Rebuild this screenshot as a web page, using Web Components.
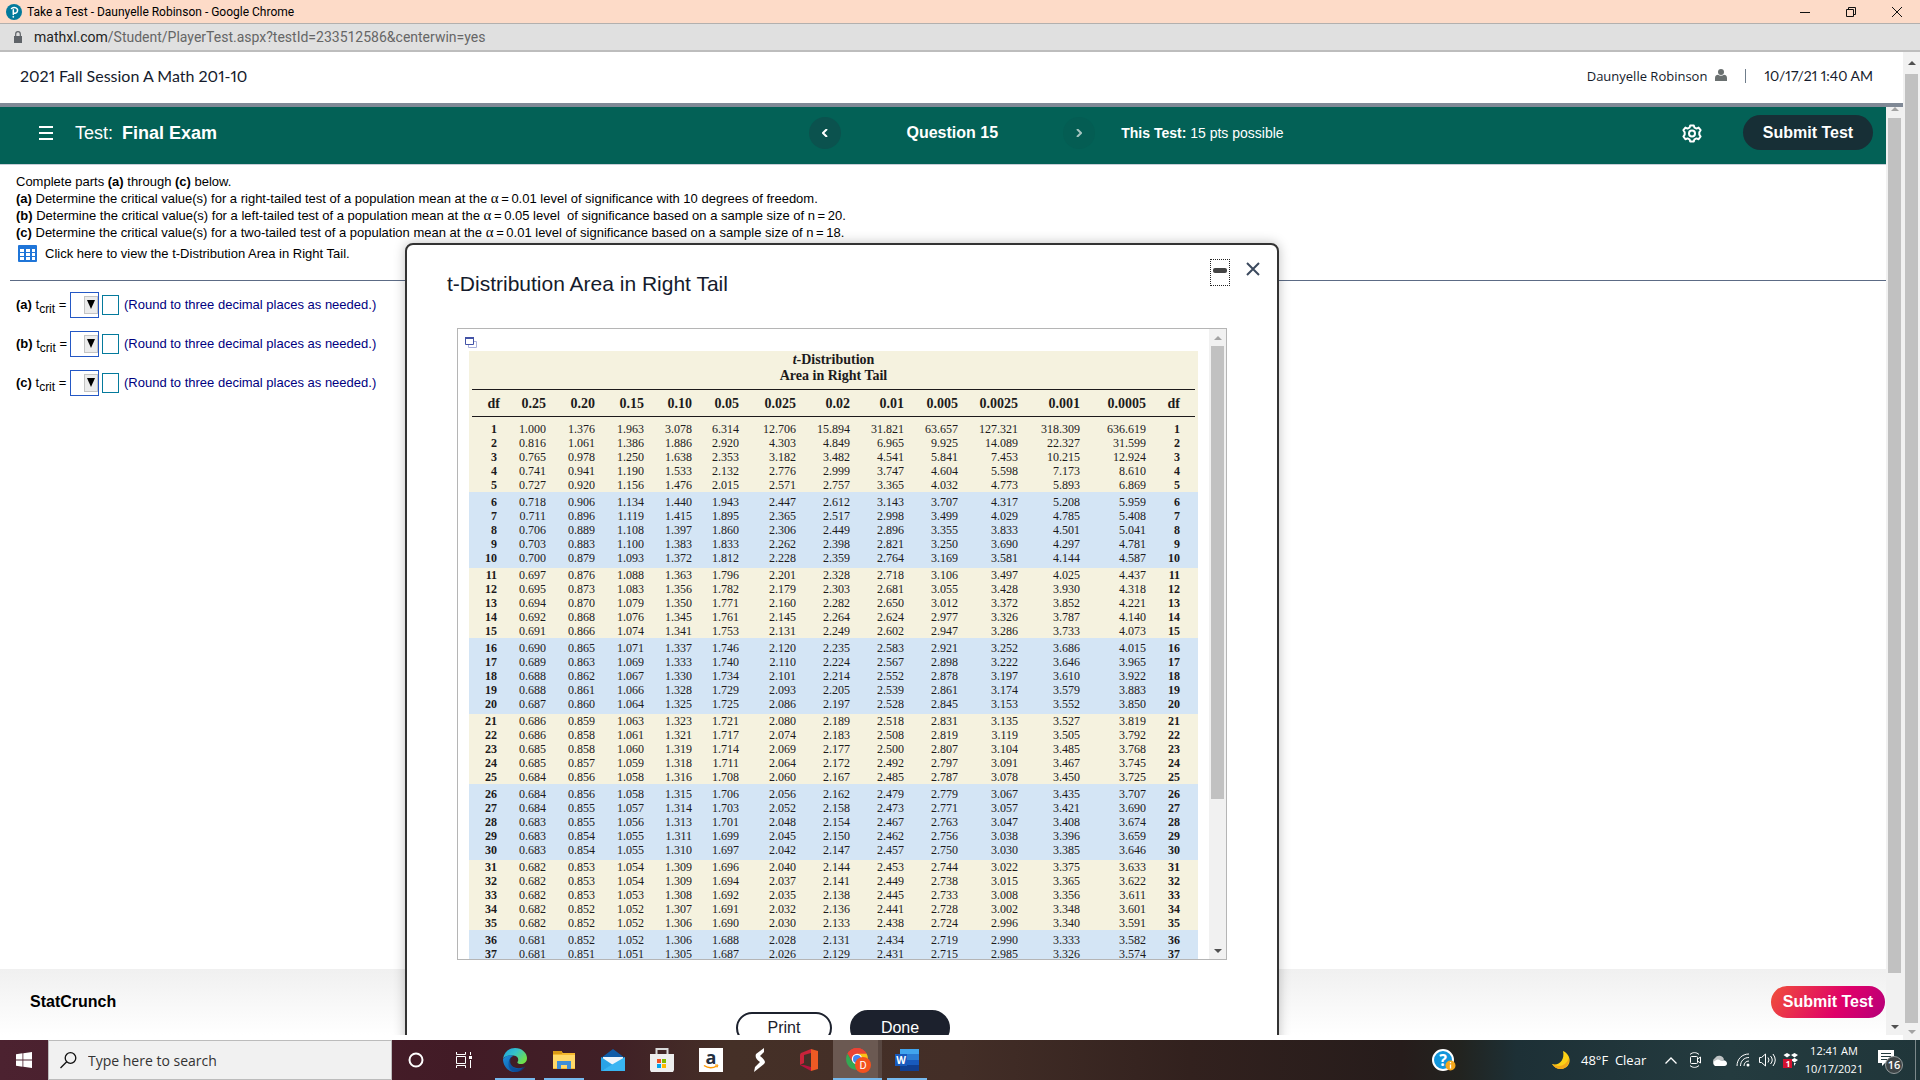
<!DOCTYPE html>
<html lang="en">
<head>
<meta charset="utf-8">
<title>Take a Test - Daunyelle Robinson - Google Chrome</title>
<style>
  body {
    margin: 0;
    height: 100vh;
    overflow: hidden;
    font-family: "Liberation Sans", Arial, sans-serif;
    background: #fff;
    color: #000;
  }
</style>
</head>
<body>
<desktop-screen>
  <window-bar slot="window">Take a Test - Daunyelle Robinson - Google Chrome</window-bar>
  <address-bar slot="window" host="mathxl.com" path="/Student/PlayerTest.aspx?testId=233512586&amp;centerwin=yes"></address-bar>
  <course-header slot="page" user="Daunyelle Robinson" time="10/17/21 1:40 AM">2021 Fall Session A Math 201-10</course-header>
  <test-player slot="page">
    <test-bar slot="top" name="Final Exam" points="15 pts possible">Question 15</test-bar>
    <question-text slot="content"></question-text>
    <answer-row slot="content" part="a"></answer-row>
    <answer-row slot="content" part="b"></answer-row>
    <answer-row slot="content" part="c"></answer-row>
    <player-footer slot="bottom"></player-footer>
    <popup-dialog slot="popup" heading="t-Distribution Area in Right Tail">
      <t-table></t-table>
    </popup-dialog>
  </test-player>
  <task-bar slot="taskbar"></task-bar>
</desktop-screen>

<script>
// Page shell: window bars, the page with its scrollbar, the taskbar
class DesktopScreen extends HTMLElement {
  constructor() {
    super();
    this.attachShadow({ mode: 'open' });
    this.shadowRoot.innerHTML = `
      <style>
        :host { display: flex; flex-direction: column; height: 100vh; }
        .view { display: flex; flex: 1; min-height: 0; }
        .page { display: flex; flex-direction: column; flex: 1; min-width: 0; padding-bottom: 5px; }
      </style>
      <slot name="window"></slot>
      <div class="view">
        <div class="page"><slot name="page"></slot></div>
        <scroll-bar style="--up: 22px; --thumb: 100%; --up-color: #505050; --down-color: #a3a3a3"></scroll-bar>
      </div>
      <slot name="taskbar"></slot>
    `;
  }
}
customElements.define('desktop-screen', DesktopScreen);

class ScrollBar extends HTMLElement {
  constructor() {
    super();
    this.attachShadow({ mode: 'open' });
    this.shadowRoot.innerHTML = `
      <style>
        :host {
          display: flex;
          flex-direction: column;
          flex: none;
          width: 17px;
          background: #f1f1f1;
        }
        .arrow { display: flex; align-items: center; justify-content: center; flex: none; height: 17px; }
        .up { height: var(--up, 17px); align-items: var(--up-align, center); }
        .up svg { fill: var(--up-color, #a3a3a3); }
        .down svg { fill: var(--down-color, #505050); }
        .track { flex: 1; padding: 0 2px; }
        .thumb { height: var(--thumb); background: #c1c1c1; }
      </style>
      <div class="arrow up"><svg width="8" height="4"><path d="M0 4 4 0 8 4z"/></svg></div>
      <div class="track"><div class="thumb"></div></div>
      <div class="arrow down"><svg width="8" height="4"><path d="M0 0 4 4 8 0z"/></svg></div>
    `;
  }
}
customElements.define('scroll-bar', ScrollBar);

class WindowBar extends HTMLElement {
  constructor() {
    super();
    this.attachShadow({ mode: 'open' });
    this.shadowRoot.innerHTML = `
      <style>
        :host {
          display: flex;
          align-items: center;
          height: 23px;
          padding-left: 6px;
          background: #fddbc8;
          border-bottom: 1px solid #b3b0ae;
          font: 12px/16px Roboto, "Open Sans", sans-serif;
        }
        .title { flex: 1; margin-left: 5px; }
        button {
          display: flex;
          align-items: center;
          justify-content: center;
          width: 46px;
          height: 22px;
          padding: 0;
          border: 0;
          background: none;
        }
        .buttons { display: flex; }
        svg { fill: none; stroke: #111; }
        .logo { stroke: none; }
      </style>
      <svg class="logo" width="16" height="16" viewBox="0 0 16 16">
        <circle cx="8" cy="8" r="8" fill="#047a9c"/>
        <path d="M5.500 4.500C8.500 2.500 12 4 11.500 6.800 11.200 8.800 9.400 9.600 7.600 9.200M7.300 5.800v4.700" fill="none" stroke="#fff" stroke-width="1.500" stroke-linecap="round"/>
        <circle cx="7.300" cy="12.800" r=".9" fill="#fff"/>
      </svg>
      <span class="title"><slot></slot></span>
      <div class="buttons">
        <button aria-label="Minimize"><svg width="10" height="10"><path d="M0 5.500h10"/></svg></button>
        <button aria-label="Restore"><svg width="10" height="10"><path d="M.5 2.500h7v7h-7zM2.500 2.500v-2h7v7h-2"/></svg></button>
        <button aria-label="Close"><svg width="10" height="10"><path d="M0 0 10 10M10 0 0 10"/></svg></button>
      </div>
    `;
  }
}
customElements.define('window-bar', WindowBar);

class AddressBar extends HTMLElement {
  connectedCallback() {
    this.attachShadow({ mode: 'open' });
    this.shadowRoot.innerHTML = `
      <style>
        :host {
          display: flex;
          align-items: center;
          gap: 12px;
          height: 26px;
          padding-left: 14px;
          background: #e0e0e0;
          border-bottom: 2px solid #bdbdbd;
          font: 14px/20px Roboto, "Open Sans", sans-serif;
          color: #666;
        }
        b { font-weight: normal; color: #222; }
      </style>
      <svg width="8" height="12" viewBox="0 0 8 12">
        <path d="M0 5h8v7H0z" fill="#5f6368"/>
        <path d="M1.700 5V3a2.300 2.300 0 0 1 4.600 0v2" fill="none" stroke="#5f6368" stroke-width="1.200"/>
      </svg>
      <span><b>${this.getAttribute('host')}</b>${this.getAttribute('path').replace('&', '&amp;')}</span>
    `;
  }
}
customElements.define('address-bar', AddressBar);

class CourseHeader extends HTMLElement {
  connectedCallback() {
    this.attachShadow({ mode: 'open' });
    this.shadowRoot.innerHTML = `
      <style>
        :host {
          display: flex;
          align-items: center;
          height: 48px;
          padding: 0 30px 3px 20px;
          border-bottom: 4px solid #808996;
          font: 16px/20px Lato, sans-serif;
          font-variant-numeric: proportional-nums;
          color: #151b2c;
        }
        .course { flex: 1; }
        .user { font: 13px/20px "Open Sans", sans-serif; }
        time { font-size: 14px; }
        svg { margin: 0 18px 2px 8px; fill: #6a7070; }
        .bar { width: 1px; height: 14px; margin-right: 18px; background: #6f7d8b; }
      </style>
      <span class="course"><slot></slot></span>
      <span class="user">${this.getAttribute('user')}</span>
      <svg width="12" height="12" viewBox="0 0 12 12">
        <circle cx="6" cy="3" r="3"/>
        <path d="M0 12V9c0-2 1.500-3.200 3-3.200 1.800 1.400 4.200 1.400 6 0 1.500 0 3 1.200 3 3.200v3z"/>
      </svg>
      <span class="bar"></span>
      <time>${this.getAttribute('time')}</time>
    `;
  }
}
customElements.define('course-header', CourseHeader);

class TestPlayer extends HTMLElement {
  constructor() {
    super();
    this.attachShadow({ mode: 'open' });
    this.shadowRoot.innerHTML = `
      <style>
        :host { display: flex; flex: 1; min-height: 0; position: relative; overflow: hidden; }
        .frame { display: flex; flex-direction: column; flex: 1; min-width: 0; }
        .content { flex: 1; min-height: 0; }
        /* the popup floats over the question */
        ::slotted([slot="popup"]) { position: absolute; left: 405px; top: 136px; }
      </style>
      <div class="frame">
        <slot name="top"></slot>
        <div class="content"><slot name="content"></slot></div>
        <slot name="bottom"></slot>
      </div>
      <scroll-bar style="--up: 11px; --up-align: flex-start; --thumb: 95%"></scroll-bar>
      <slot name="popup"></slot>
    `;
  }
}
customElements.define('test-player', TestPlayer);

class TestBar extends HTMLElement {
  connectedCallback() {
    this.attachShadow({ mode: 'open' });
    this.shadowRoot.innerHTML = `
      <style>
        :host {
          display: grid;
          grid-template-columns: 42% 286px 1fr auto auto;
          align-items: center;
          height: 57px;
          padding: 0 13px 0 39px;
          background: #036156;
          border-bottom: 1px solid #c7cdd6;
          font-size: 16px;
          line-height: 20px;
          color: #fff;
        }
        button {
          display: flex;
          align-items: center;
          justify-content: center;
          padding: 0;
          border: 0;
          background: none;
          color: inherit;
        }
        svg { fill: none; stroke: currentColor; stroke-width: 2; }
        .name { display: flex; align-items: center; gap: 9px; font-size: 18px; padding-bottom: 6px; }
        .menu { margin-right: 13px; }
        .nav { display: flex; align-items: center; justify-content: space-between; font-weight: bold; padding-bottom: 6px; }
        .nav button { width: 32px; height: 32px; border-radius: 16px; background: #0b524e; }
        .nav button:disabled { background: #045d53; color: #a5c5c0; }
        .points { margin-left: 26px; font-size: 14px; padding-bottom: 6px; }
        .gear { width: 24px; height: 24px; margin: 0 39px 4px 0; }
        .submit {
          width: 130px;
          height: 35px;
          margin-bottom: 6px;
          border-radius: 18px;
          background: #172f36;
          font: bold 16px/20px "Liberation Sans", Arial, sans-serif;
        }
      </style>
      <div class="name">
        <button class="menu" aria-label="Menu"><svg width="14" height="14"><path d="M0 1h14M0 7h14M0 13h14"/></svg></button>
        <span>Test:</span><b>${this.getAttribute('name')}</b>
      </div>
      <div class="nav">
        <button aria-label="Previous question"><svg width="6" height="8"><path d="M5 0 1 4 5 8"/></svg></button>
        <span><slot></slot></span>
        <button aria-label="Next question" disabled><svg width="6" height="8"><path d="M1 0 5 4 1 8"/></svg></button>
      </div>
      <div class="points"><b>This Test:</b> ${this.getAttribute('points')}</div>
      <button class="gear" aria-label="Settings">
        <svg width="20" height="20" viewBox="0 0 20 20">
          <path d="M8.200 1.500h3.600l.7 2.200 2 .9 2.100-1 2 2.600-1.300 2v2.400l1.300 1.900-2 2.700-2.200-.8-1.900.9-.7 2.100H8.200l-.7-2.100-1.900-.9-2.200.8-2-2.700 1.300-1.900V8.200l-1.300-2 2-2.600 2.100 1 2-.9z" stroke-linejoin="round"/>
          <circle cx="10" cy="9.500" r="3"/>
        </svg>
      </button>
      <button class="submit">Submit Test</button>
    `;
  }
}
customElements.define('test-bar', TestBar);

class QuestionText extends HTMLElement {
  constructor() {
    super();
    this.attachShadow({ mode: 'open' });
    this.shadowRoot.innerHTML = `
      <style>
        :host {
          display: block;
          margin: 0 0 4px 10px;
          padding: 8px 0 14px 6px;
          border-bottom: 1px solid #5c6b85;
          font-size: 13px;
          line-height: 17px;
        }
        p { margin: 0; white-space: pre; }
        i { font-style: normal; font-family: "Liberation Serif", serif; font-size: 15px; line-height: 1px; }
        a { display: inline-flex; align-items: center; gap: 8px; margin: 4px 0 0 2px; color: inherit; text-decoration: none; }
      </style>
      <p>Complete parts <b>(a)</b> through <b>(c)</b> below.</p>
      <p><b>(a)</b> Determine the critical value(s) for a right-tailed test of a population mean at the <i>α</i>&thinsp;=&thinsp;0.01 level of significance with 10 degrees of freedom.</p>
      <p><b>(b)</b> Determine the critical value(s) for a left-tailed test of a population mean at the <i>α</i>&thinsp;=&thinsp;0.05 level  of significance based on a sample size of n&thinsp;=&thinsp;20.</p>
      <p><b>(c)</b> Determine the critical value(s) for a two-tailed test of a population mean at the <i>α</i>&thinsp;=&thinsp;0.01 level of significance based on a sample size of n&thinsp;=&thinsp;18.</p>
      <a href="#table">
        <svg width="19" height="17">
          <rect width="19" height="17" rx="1" fill="#1f75d8"/>
          <path d="M2 4h4v3H2zM8 4h4v3H8zM14 4h3v3h-3zM2 8h4v3H2zM8 8h4v3H8zM14 8h3v3h-3zM2 12h4v3H2zM8 12h4v3H8zM14 12h3v3h-3z" fill="#fff"/>
        </svg>
        <span>Click here to view the t-Distribution Area in Right Tail.</span>
      </a>
    `;
  }
}
customElements.define('question-text', QuestionText);

class AnswerRow extends HTMLElement {
  connectedCallback() {
    const part = this.getAttribute('part');
    this.attachShadow({ mode: 'open' });
    this.shadowRoot.innerHTML = `
      <style>
        :host {
          display: flex;
          align-items: center;
          height: 39px;
          padding-left: 16px;
          font-size: 13px;
          line-height: 17px;
        }
        label { width: 54px; white-space: nowrap; }
        sub { font-size: 12px; line-height: 1px; }
        .drop { display: grid; width: 29px; height: 26px; margin-right: 3px; }
        .drop > * { grid-area: 1 / 1; }
        select { appearance: none; box-sizing: border-box; width: 29px; height: 26px; border: 1px solid #2458c5; border-radius: 0; background: #fff; }
        .arrow {
          justify-self: end;
          align-self: center;
          width: 14px;
          height: 18px;
          margin-right: 1px;
          border: 1px solid #c4c4c4;
          box-sizing: border-box;
          background: #ececec;
          pointer-events: none;
        }
        .arrow svg { display: block; margin: 3px 2px; }
        input { box-sizing: border-box; width: 17px; height: 20px; margin: 0 5px 0 0; padding: 0 1px; border: 1px solid #047a9c; }
        .hint { color: #000080; }
      </style>
      <label for="sign"><b>(${part})</b> t<sub>crit</sub> =</label>
      <span class="drop">
        <select id="sign"><option></option><option>±</option><option>-</option></select>
        <span class="arrow"><svg width="8" height="10"><path d="M0 0h8L4 9z"/></svg></span>
      </span>
      <input id="value" type="text" aria-label="Critical value for part ${part}">
      <span class="hint">(Round to three decimal places as needed.)</span>
    `;
  }
}
customElements.define('answer-row', AnswerRow);

class PlayerFooter extends HTMLElement {
  constructor() {
    super();
    this.attachShadow({ mode: 'open' });
    this.shadowRoot.innerHTML = `
      <style>
        :host {
          display: flex;
          align-items: center;
          justify-content: space-between;
          box-sizing: border-box;
          height: 66px;
          padding: 0 1px 0 30px;
          background: linear-gradient(#f0f0f0, #fff);
        }
        a { color: #000; font: bold 16px/20px "Liberation Sans", Arial, sans-serif; text-decoration: none; }
        button {
          width: 114px;
          height: 32px;
          padding: 0;
          border: 0;
          border-radius: 16px;
          background: linear-gradient(120deg, #f0503a, #df0069 60%, #b5007a);
          color: #fff;
          font: bold 16px/20px "Liberation Sans", Arial, sans-serif;
        }
      </style>
      <a href="#statcrunch">StatCrunch</a>
      <button>Submit Test</button>
    `;
  }
}
customElements.define('player-footer', PlayerFooter);

class PopupDialog extends HTMLElement {
  connectedCallback() {
    this.attachShadow({ mode: 'open' });
    this.shadowRoot.innerHTML = `
      <style>
        :host {
          display: block;
          box-sizing: border-box;
          width: 874px;
          border: 2px solid #333;
          border-radius: 8px;
          background: #fff;
          box-shadow: 0 0 12px rgba(0, 0, 0, .25);
        }
        header { display: flex; align-items: flex-start; height: 83px; padding: 0 17px 0 40px; }
        h2 { flex: 1; margin: 27px 0 0; font-weight: normal; font-size: 21px; line-height: 24px; color: #151b2c; }
        header button { display: flex; align-items: center; justify-content: center; padding: 0; border: 0; background: none; }
        header .min { width: 20px; height: 27px; margin: 14px 16px 0 0; padding-bottom: 5px; border: 1px dotted #222; box-sizing: border-box; }
        .min span { width: 14px; height: 5px; border-radius: 2px; background: #444; }
        .close { margin-top: 17px; }
        .scroller {
          display: flex;
          box-sizing: border-box;
          height: 632px;
          margin: 0 50px;
          border: 1px solid #b5b5b5;
          overflow: hidden;
        }
        .inner { flex: 1; min-width: 0; padding-left: 11px; }
        .open { display: flex; height: 14px; margin-left: -4px; padding: 8px 0 0; border: 0; background: none; box-sizing: content-box; }
        footer { display: flex; justify-content: center; align-items: center; gap: 18px; padding: 50px 0 40px 2px; }
        footer button {
          width: 96px;
          height: 32px;
          padding: 0;
          border: 2px solid #1c212d;
          border-radius: 17px;
          background: #fff;
          color: #1c212d;
          font: 16px/20px "Liberation Sans", Arial, sans-serif;
        }
        footer .done { width: 100px; height: 36px; border-radius: 18px; background: #1c212d; color: #fff; }
      </style>
      <header>
        <h2>${this.getAttribute('heading')}</h2>
        <button class="min" aria-label="Minimize"><span></span></button>
        <button class="close" aria-label="Close"><svg width="14" height="14"><path d="M1 1 13 13M13 1 1 13" stroke="#3c4a5e" stroke-width="2"/></svg></button>
      </header>
      <div class="scroller">
        <div class="inner">
          <button class="open" aria-label="Open table in new window">
            <svg width="12" height="11">
              <path d="M3.500 4.500h8v6h-8z" fill="#fff" stroke="#aab1dc"/>
              <path d="M.5.5h8v7h-8z" fill="#fff" stroke="#4353a6"/><path d="M0 0h9v2H0z" fill="#4353a6"/>
            </svg>
          </button>
          <slot></slot>
        </div>
        <scroll-bar style="--up: 17px; --thumb: 76%"></scroll-bar>
      </div>
      <footer><button>Print</button><button class="done">Done</button></footer>
    `;
  }
}
customElements.define('popup-dialog', PopupDialog);

// Critical values of the t-distribution, one line per df
const areas = '0.25 0.20 0.15 0.10 0.05 0.025 0.02 0.01 0.005 0.0025 0.001 0.0005'.split(' ');
const values = `
1.000 1.376 1.963 3.078 6.314 12.706 15.894 31.821 63.657 127.321 318.309 636.619
0.816 1.061 1.386 1.886 2.920 4.303 4.849 6.965 9.925 14.089 22.327 31.599
0.765 0.978 1.250 1.638 2.353 3.182 3.482 4.541 5.841 7.453 10.215 12.924
0.741 0.941 1.190 1.533 2.132 2.776 2.999 3.747 4.604 5.598 7.173 8.610
0.727 0.920 1.156 1.476 2.015 2.571 2.757 3.365 4.032 4.773 5.893 6.869
0.718 0.906 1.134 1.440 1.943 2.447 2.612 3.143 3.707 4.317 5.208 5.959
0.711 0.896 1.119 1.415 1.895 2.365 2.517 2.998 3.499 4.029 4.785 5.408
0.706 0.889 1.108 1.397 1.860 2.306 2.449 2.896 3.355 3.833 4.501 5.041
0.703 0.883 1.100 1.383 1.833 2.262 2.398 2.821 3.250 3.690 4.297 4.781
0.700 0.879 1.093 1.372 1.812 2.228 2.359 2.764 3.169 3.581 4.144 4.587
0.697 0.876 1.088 1.363 1.796 2.201 2.328 2.718 3.106 3.497 4.025 4.437
0.695 0.873 1.083 1.356 1.782 2.179 2.303 2.681 3.055 3.428 3.930 4.318
0.694 0.870 1.079 1.350 1.771 2.160 2.282 2.650 3.012 3.372 3.852 4.221
0.692 0.868 1.076 1.345 1.761 2.145 2.264 2.624 2.977 3.326 3.787 4.140
0.691 0.866 1.074 1.341 1.753 2.131 2.249 2.602 2.947 3.286 3.733 4.073
0.690 0.865 1.071 1.337 1.746 2.120 2.235 2.583 2.921 3.252 3.686 4.015
0.689 0.863 1.069 1.333 1.740 2.110 2.224 2.567 2.898 3.222 3.646 3.965
0.688 0.862 1.067 1.330 1.734 2.101 2.214 2.552 2.878 3.197 3.610 3.922
0.688 0.861 1.066 1.328 1.729 2.093 2.205 2.539 2.861 3.174 3.579 3.883
0.687 0.860 1.064 1.325 1.725 2.086 2.197 2.528 2.845 3.153 3.552 3.850
0.686 0.859 1.063 1.323 1.721 2.080 2.189 2.518 2.831 3.135 3.527 3.819
0.686 0.858 1.061 1.321 1.717 2.074 2.183 2.508 2.819 3.119 3.505 3.792
0.685 0.858 1.060 1.319 1.714 2.069 2.177 2.500 2.807 3.104 3.485 3.768
0.685 0.857 1.059 1.318 1.711 2.064 2.172 2.492 2.797 3.091 3.467 3.745
0.684 0.856 1.058 1.316 1.708 2.060 2.167 2.485 2.787 3.078 3.450 3.725
0.684 0.856 1.058 1.315 1.706 2.056 2.162 2.479 2.779 3.067 3.435 3.707
0.684 0.855 1.057 1.314 1.703 2.052 2.158 2.473 2.771 3.057 3.421 3.690
0.683 0.855 1.056 1.313 1.701 2.048 2.154 2.467 2.763 3.047 3.408 3.674
0.683 0.854 1.055 1.311 1.699 2.045 2.150 2.462 2.756 3.038 3.396 3.659
0.683 0.854 1.055 1.310 1.697 2.042 2.147 2.457 2.750 3.030 3.385 3.646
0.682 0.853 1.054 1.309 1.696 2.040 2.144 2.453 2.744 3.022 3.375 3.633
0.682 0.853 1.054 1.309 1.694 2.037 2.141 2.449 2.738 3.015 3.365 3.622
0.682 0.853 1.053 1.308 1.692 2.035 2.138 2.445 2.733 3.008 3.356 3.611
0.682 0.852 1.052 1.307 1.691 2.032 2.136 2.441 2.728 3.002 3.348 3.601
0.682 0.852 1.052 1.306 1.690 2.030 2.133 2.438 2.724 2.996 3.340 3.591
0.681 0.852 1.052 1.306 1.688 2.028 2.131 2.434 2.719 2.990 3.333 3.582
0.681 0.851 1.051 1.305 1.687 2.026 2.129 2.431 2.715 2.985 3.326 3.574
`.trim().split('\n').map(line => line.split(' '));
const widths = [31, 46, 49, 49, 48, 47, 57, 54, 54, 54, 60, 62, 66, 52];

class TTable extends HTMLElement {
  constructor() {
    super();
    this.attachShadow({ mode: 'open' });
    // rows come in groups of five
    let bodies = '';
    for (let i = 0; i < values.length; i += 5) {
      const rows = values.slice(i, i + 5).map((row, n) => {
        const df = `<th scope="row">${i + n + 1}</th>`;
        return `<tr>${df}${row.map(v => `<td>${v}</td>`).join('')}${df}</tr>`;
      });
      bodies += `<tbody>${rows.join('')}</tbody>`;
    }
    this.shadowRoot.innerHTML = `
      <style>
        :host { display: block; }
        table {
          table-layout: fixed;
          width: 729px;
          border-collapse: collapse;
          font: 12px/14px "Liberation Serif", "Times New Roman", serif;
          text-align: right;
          color: #1c1a1b;
          background: #f5f2df;
        }
        caption { padding: 1px 0 5px; font: bold 14px/16px "Liberation Serif", serif; text-align: center; background: #f5f2df; }
        td, th { padding: 0; }
        tbody th:first-child { padding-right: 3px; }
        th:last-child { padding-right: 18px; }
        thead tr {
          background:
            linear-gradient(#1c1a1b, #1c1a1b) center 0 / calc(100% - 6px) 1px no-repeat,
            linear-gradient(#1c1a1b, #1c1a1b) center 27px / calc(100% - 6px) 1px no-repeat;
        }
        thead th { height: 30px; padding-bottom: 3px; font-size: 14px; }
        tbody:nth-of-type(even) { background: #d4e5f5; }
        tbody:nth-of-type(even) tr:first-child > * { padding-top: 3px; }
        tbody:nth-of-type(even) tr:last-child > * { padding-bottom: 3px; }
      </style>
      <table>
        <caption><i>t</i>-Distribution<br>Area in Right Tail</caption>
        <colgroup>${widths.map(w => `<col style="width: ${w}px">`).join('')}</colgroup>
        <thead><tr><th>df</th>${areas.map(a => `<th>${a}</th>`).join('')}<th>df</th></tr></thead>
        ${bodies}
      </table>
    `;
  }
}
customElements.define('t-table', TTable);

class TaskBar extends HTMLElement {
  constructor() {
    super();
    this.attachShadow({ mode: 'open' });
    this.shadowRoot.innerHTML = `
      <style>
        :host {
          display: flex;
          flex: none;
          height: 40px;
          background: linear-gradient(90deg, #4c2230, #421b26 24%, #402026 32%, #453027 38%, #432e27 50%, #32211e 62%, #261c1b 73%, #22231f 76%, #1d3036 79%, #243b3f 90%, #20363a);
          font: 12px/18px "Open Sans", "Noto Sans", sans-serif;
          color: #fff;
        }
        button {
          display: flex;
          align-items: center;
          justify-content: center;
          box-sizing: border-box;
          height: 40px;
          padding: 0;
          border: 0;
          background: none;
          color: inherit;
          font: inherit;
        }
        svg { overflow: visible; }
        .start, .tool { width: 48px; }
        .search {
          display: flex;
          align-items: center;
          gap: 11px;
          box-sizing: border-box;
          width: 344px;
          padding-left: 11px;
          border: 1px solid #bcbcbc;
          background: #f1f1f1;
        }
        .search input { flex: 1; min-width: 0; padding: 1px 0 0; border: 0; background: none; font: 14px/20px "Open Sans", "Noto Sans", sans-serif; }
        .search input::placeholder { color: #333; opacity: 1; }
        .apps { display: flex; flex: 1; margin-left: 2px; }
        .apps button { width: 49px; border: solid transparent; border-width: 2px 0; }
        .apps .run { position: relative; }
        .apps .run::after { content: ""; position: absolute; left: 5px; right: 4px; bottom: -2px; height: 2px; background: #76b9ed; }
        .apps .active { background: linear-gradient(90deg, #6b5952 45px, #574640 45px) border-box; }
        .apps .active::after { left: 0; right: 0; }
        .help { width: 48px; margin-right: 73px; }
        .weather { gap: 11px; width: 119px; justify-content: flex-start; padding-left: 12px; font-size: 13px; white-space: pre; }
        .tray { display: flex; }
        .icon { width: 24px; }
        .line { fill: none; stroke: #fff; }
        .clock { display: block; width: 62px; text-align: center; font-size: 11px; white-space: nowrap; }
        .edge { margin: 0 4px 0 2px; border-left: 1px solid #7c898b; }
      </style>
      <button class="start" aria-label="Start"><svg width="16" height="16" fill="#fff"><path d="M0 2.200 6.500 1.300V7.600H0zM7.300 1.200 16 0V7.600H7.300zM0 8.400h6.500v6.300L0 13.800zM7.300 8.400H16V16l-8.700-1.200z"/></svg></button>
      <div class="search">
        <svg width="17" height="17" fill="none" stroke="#111" stroke-width="1.300"><circle cx="10.500" cy="6" r="5.300"/><path d="M6.700 9.800.5 16"/></svg>
        <input type="search" placeholder="Type here to search" aria-label="Type here to search">
      </div>
      <button class="tool" aria-label="Cortana"><svg width="18" height="18"><circle cx="9" cy="9" r="6.500" fill="none" stroke="#fff" stroke-width="2"/></svg></button>
      <button class="tool" aria-label="Task view"><svg class="line" width="18" height="16"><path d="M1.500 0v2.500h9V0M1.500 16v-2.500h9V16M1.500 4.500h9v7h-9zM15.500 0v3M15.500 8v8"/><path d="M14 4h3v3h-3z" fill="#fff" stroke="none"/></svg></button>
      <div class="apps">
        <button class="run" aria-label="Edge">
          <svg width="24" height="24" viewBox="0 0 24 24">
            <defs>
              <linearGradient id="e1" x1="0" y1="0" x2="1" y2=".6"><stop offset="0" stop-color="#1d9fe0"/><stop offset=".5" stop-color="#35c1c9"/><stop offset="1" stop-color="#6fdf4b"/></linearGradient>
              <linearGradient id="e2" x1="0" y1="0" x2="1" y2="1"><stop offset="0" stop-color="#1b8fdd"/><stop offset="1" stop-color="#0c4f9c"/></linearGradient>
            </defs>
            <path d="M0 11C1 4 6 0 12 0c7 0 12 5 12 10 0 4-3 6-6 6-3 0-4-1-3.500-2 1.500-2 1-6-4-6.500C6 7 2 8 0 11z" fill="url(#e1)"/>
            <path d="M0 11c3-4 8-4.500 10.500-3.300C7 9 6 12 7 15c1.500 4 6 6.500 13 4.500-2 3-5 4.500-8 4.500C5 24 0 18 0 11z" fill="url(#e2)"/>
            <path d="M10 8c-4 3-3 9 1 11.500 3 2 7 1.500 10-.7.700-.5 1 0 .7.700-2 3-5 4.500-8 4.500-6 0-9-5-8-10 .5-3 2-5 4.300-6z" fill="#0a3f8c" opacity=".55"/>
          </svg>
        </button>
        <button class="run" aria-label="File Explorer">
          <svg width="22" height="18"><path d="M0 0h8l2 2h12v16H0z" fill="#f5b92e"/><path d="M0 4h22v13H0z" fill="#ffd968"/><path d="M0 0h9v3H0z" fill="#d99a16"/><path d="M4 18v-8h14v8h-4v-4H8v4z" fill="#3d8fd8"/></svg>
        </button>
        <button aria-label="Mail">
          <svg width="24" height="22"><path d="M0 9 12 0l12 9v13H0z" fill="#0f5ba7"/><path d="M2 8h20v9H2z" fill="#eef5fb"/><path d="M0 8l12 8-12 6z" fill="#2aa3e6"/><path d="M24 8 0 22h24z" fill="#39b5f2"/></svg>
        </button>
        <button aria-label="Microsoft Store">
          <svg width="24" height="24"><path d="M6.500 7V1h11v6" fill="none" stroke="#d9d9d9" stroke-width="2"/><path d="M0 6h24v16l-1 2H1l-1-2z" fill="#eee"/><path d="M7 11h4v4H7z" fill="#f25022"/><path d="M12 11h4v4h-4z" fill="#7fba00"/><path d="M7 16h4v4H7z" fill="#00a4ef"/><path d="M12 16h4v4h-4z" fill="#ffb900"/></svg>
        </button>
        <button aria-label="Amazon">
          <svg width="24" height="24"><path d="M0 0h24v24H0z" fill="#fff"/><text x="12" y="16" text-anchor="middle" font-family="Open Sans" font-size="18" font-weight="bold" fill="#232f3e">a</text><path d="M5 17.500c4 2.800 9 2.700 13 .3" fill="none" stroke="#f90" stroke-width="1.500"/><path d="M16 17h3l-1 2.500" fill="none" stroke="#f90"/></svg>
        </button>
        <button aria-label="Shortcuts"><svg width="12" height="24" fill="#fff"><path d="M10 0 2 6c-1 3 0 5 4 8l-5 5-1 5 10-8c2-2 1-4-4-8l4-4z"/></svg></button>
        <button aria-label="Office">
          <svg width="18" height="22"><path d="M11 0 1 4C0 5 0 6 0 7v9l4-2V6l7-2z" fill="#c8233a"/><path d="M11 0l7 2v18l-7 2z" fill="#ed5a24"/><path d="M0 16l11 6v-4l-7-2z" fill="#b8123e"/></svg>
        </button>
        <button class="run active" aria-label="Chrome">
          <svg width="24" height="24" viewBox="0 0 24 24">
            <path d="M11 11 1.500 5.500A11 11 0 0 1 20.500 5.500z" fill="#ea4335"/><path d="M11 11V5.500h9.500A11 11 0 0 1 11 22z" fill="#fbc116"/><path d="M11 11 6 14 1.500 5.500A11 11 0 0 0 11 22l4-8z" fill="#34a853"/>
            <path d="M1.500 5.500A11 11 0 0 1 20.500 5.500H11L6 13z" fill="#ea4335"/>
            <circle cx="11" cy="11" r="5.200" fill="#fff"/><circle cx="11" cy="11" r="4" fill="#4285f4"/>
            <circle cx="17" cy="17" r="8" fill="#f4511e"/><text x="17" y="21" text-anchor="middle" font-family="Roboto" font-size="11" fill="#fff">D</text>
          </svg>
        </button>
        <button class="run" aria-label="Word">
          <svg width="24" height="22"><path d="M5 0h19v6H5z" fill="#41a5ee"/><path d="M5 5h19v6H5z" fill="#2b7cd3"/><path d="M5 11h19v6H5z" fill="#185abd"/><path d="M5 16h19v6H5z" fill="#103f91"/><path d="M0 5h12v12H0z" fill="#185abd"/><text x="6" y="15" text-anchor="middle" font-family="Open Sans" font-size="10" font-weight="bold" fill="#fff">W</text></svg>
        </button>
      </div>
      <button class="help" aria-label="Get help">
        <svg width="22" height="22"><circle cx="11" cy="11" r="10" fill="#1296db" stroke="#fff" stroke-width="2"/><text x="11" y="17" text-anchor="middle" font-family="Open Sans" font-size="16" font-weight="bold" fill="#fff">?</text><circle cx="18.500" cy="16.500" r="5" fill="#f5a81c"/><path d="M18.500 15.500v4M18.500 13v1.200" stroke="#fff" stroke-width="1.300"/></svg>
      </button>
      <button class="weather"><svg width="18" height="18"><path d="M11 0c9 4 9 16-1 18-4 .5-8-1.500-10-5 7 2 13-4 11-13z" fill="#fcd116"/><path d="M17 7c1 6-3 10-7 11-4 .5-8-1.500-10-5 7 4 14 2 17-6z" fill="#f2a71b"/></svg><span>48°F  Clear</span></button>
      <div class="tray">
        <button class="icon" aria-label="Show hidden icons"><svg class="line" width="12" height="7"><path d="M.5 6.500 6 1l5.500 5.500" stroke-width="1.300"/></svg></button>
        <button class="icon" aria-label="Meet now"><svg class="line" width="13" height="16"><rect x="1.500" y="4.500" width="7" height="7" rx="1"/><path d="M8.500 7 11.500 5v6L8.500 9M1 2.500C3.500 0 7.500 0 10 2.500M1 13.500c2.500 2.500 6.500 2.500 9 0"/></svg></button>
        <button class="icon" aria-label="OneDrive"><svg width="16" height="11"><path d="M4 10a4 4 0 0 1 0-7 5 5 0 0 1 9 1.500z" fill="#bfc3c4"/><path d="M4 11a3 3 0 0 1 .5-5.500C7 3.500 9 5 10 6c3-2 6 0 6 2.500 0 1.500-1 2.500-2.500 2.500z" fill="#fff"/></svg></button>
        <button class="icon" aria-label="Network"><svg class="line" width="14" height="14"><path d="M1 13C1 6 6 1 13 1M4.500 13c0-5 3.500-8.500 8.500-8.500M8 13c0-3 2-5 5-5"/><circle cx="12" cy="12" r="1.500" fill="#fff" stroke="none"/></svg></button>
        <button class="icon" aria-label="Volume"><svg class="line" width="17" height="14"><path d="M.5 4.500h2l4-3.500v12l-4-3.500h-2zM9 4.500q2 2.500 0 5M11.500 3q3.500 4 0 8M14 1q4.500 6 0 12"/></svg></button>
        <button class="icon" aria-label="Dropbox"><svg width="16" height="15"><path d="M4 0l3.500 2L4 4.500.5 2zM11.500 0 15 2l-3.500 2.500L8 2zM11.500 5 15 7l-3.500 2.500L8 7zM11 10h2l-2 3z" fill="#fff"/><path d="M0 6h9v9H0z" fill="#d4102e"/><text x="5" y="14" text-anchor="middle" font-family="Open Sans" font-size="8" font-weight="bold" fill="#fff">1</text></svg></button>
        <button class="clock">12:41 AM<br>10/17/2021</button>
        <button class="tool" aria-label="Notifications">
          <svg width="24" height="24"><path d="M1 2h16v13H8l-3 3v-3H1z" fill="#fff"/><path d="M4 5.500h10M4 8.500h10M4 11.500h6" stroke="#243b3f"/><circle cx="17" cy="17" r="8.500" fill="#3d4446" stroke="#949b9c"/><text x="17" y="21" text-anchor="middle" font-family="Open Sans" font-size="11" font-weight="600" fill="#fff">16</text></svg>
        </button>
        <span class="edge"></span>
      </div>
    `;
  }
}
customElements.define('task-bar', TaskBar);
</script>
</body>
</html>
